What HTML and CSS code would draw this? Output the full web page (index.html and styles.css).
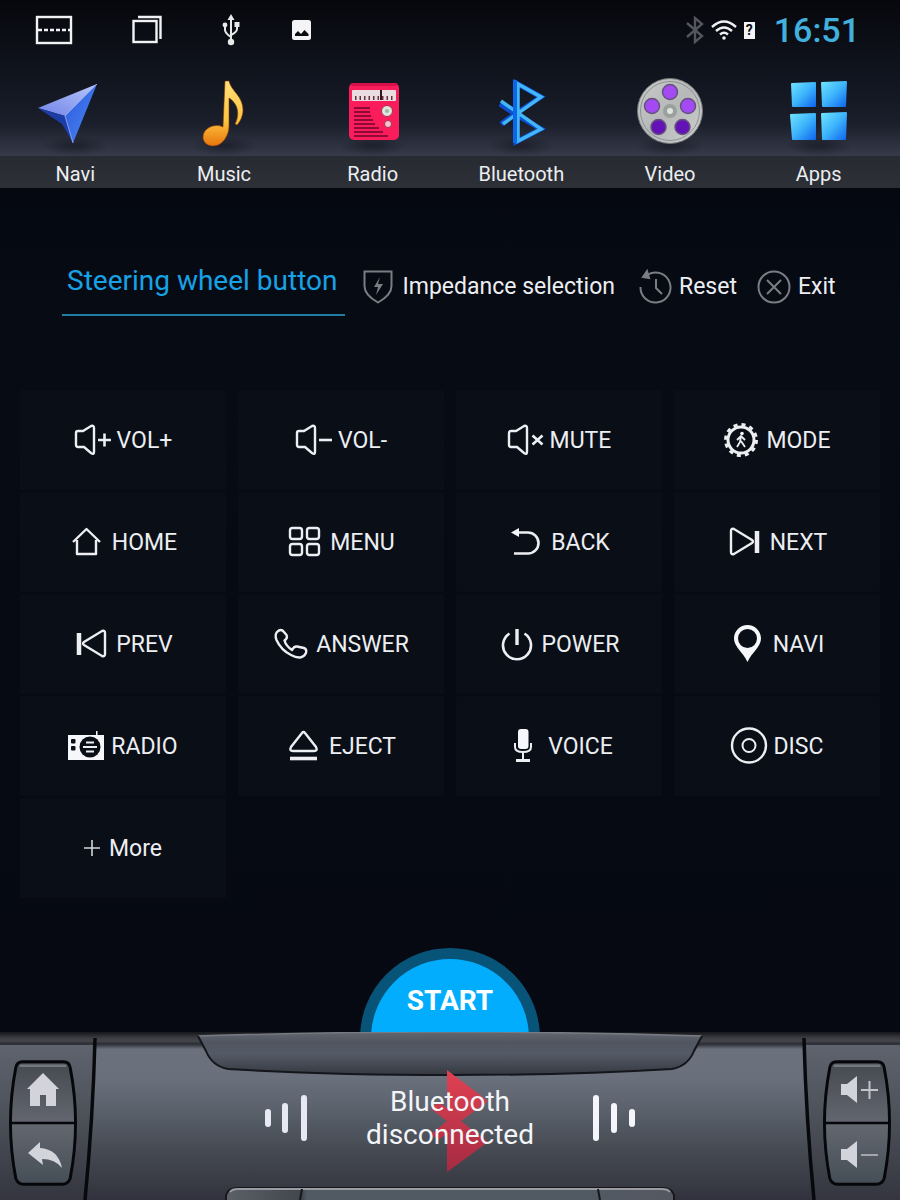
FILE: index.html
```html
<!DOCTYPE html>
<html lang="en">
<head>
<meta charset="utf-8">
<meta name="viewport" content="width=device-width, initial-scale=1">
<title>Steering wheel button</title>
<link rel="stylesheet" href="styles.css">
</head>
<body class="screen">
<header class="header">
  <div class="status">
    <div class="status-left">
      <svg width="36" height="30" viewBox="0 0 36 30" fill="none" stroke="#f2f2f4" stroke-width="2.400"><rect x="1" y="2" width="34" height="26"/><path d="M2 15h32" stroke-dasharray="4 2"/></svg>
      <svg width="30" height="30" viewBox="0 0 30 30" fill="none" stroke="#f2f2f4" stroke-width="2.400"><rect x="1.500" y="6" width="23" height="21"/><path d="M6 2h22.500v22" /></svg>
      <svg width="18" height="32" viewBox="0 0 18 32" fill="none" stroke="#e8e8ea" stroke-width="2"><path d="M9 5v22M3 12v4q0 3 6 7M15 11v4q0 3-6 6"/><g fill="#e8e8ea" stroke="none"><path d="M9 0l3.500 6h-7z"/><circle cx="9" cy="28" r="3.200"/><circle cx="3" cy="11" r="2.400"/><path d="M12.500 8h5v5h-5z"/></g></svg>
      <svg width="20" height="20" viewBox="0 0 20 20"><rect width="19" height="20" rx="2.500" fill="#f4f4f6"/><path d="M3 16v-2l3-3 3 3 3.500-4 4 4v2z" fill="#0a0c12"/></svg>
    </div>
    <div class="status-right">
      <svg width="18" height="28" viewBox="0 0 18 28" fill="none" stroke="#55565b" stroke-width="2.400"><path d="M1 7l15 13-7 6V2l7 6L1 21"/></svg>
      <svg width="26" height="20" viewBox="0 0 26 20" fill="none" stroke="#f0f0f2" stroke-width="2.400"><path d="M1 7q12-11 24 0M5 11q8-7 16 0M9 14.500q4-3.500 8 0"/><circle cx="13" cy="18" r="1.800" fill="#f0f0f2" stroke="none"/></svg>
      <span class="battery">?</span>
      <time class="clock">16:51</time>
    </div>
  </div>
  <nav class="nav">
    <a class="nav-item" href="#navi">
      <span class="nav-icon"><svg width="64" height="68" viewBox="0 0 64 68">
        <defs><linearGradient id="nv1" x1="0" x2="1" y1="1" y2="0"><stop stop-color="#6f83e8"/><stop offset="1" stop-color="#b9c6fa"/></linearGradient><linearGradient id="nv2" x1="0" x2="1" y1="0" y2="1"><stop stop-color="#2b56d8"/><stop offset="1" stop-color="#4c8bf8"/></linearGradient></defs>
        <path d="M54 7L-5 31l27 8z" fill="url(#nv1)"/><path d="M54 7L22 39l8 27z" fill="url(#nv2)"/><path d="M-5 31l27 8 8 27L19 47z" fill="#1c3ca6"/><path d="M54 7L22 39l8 27" fill="none" stroke="#88a5f6"/></svg></span>
      <span class="nav-label">Navi</span>
    </a>
    <a class="nav-item" href="#music">
      <span class="nav-icon"><svg width="64" height="68" viewBox="0 0 64 68">
        <defs><linearGradient id="mu" x1="0" x2="0" y1="0" y2="1"><stop stop-color="#ffe07a"/><stop offset=".6" stop-color="#fdc640"/><stop offset="1" stop-color="#e8750c"/></linearGradient></defs>
        <path d="M33 4h4c2 10 14 15 14 29 0 6-3 12-6 15l-2-1c4-7 5-19-6-26v28c0 9-6 20-16 20-6 0-10-4-10-9 0-9 12-14 20-10z" fill="url(#mu)" stroke="#8c3b08" stroke-width=".6"/></svg></span>
      <span class="nav-label">Music</span>
    </a>
    <a class="nav-item" href="#radio">
      <span class="nav-icon"><svg width="64" height="68" viewBox="0 0 64 68">
        <rect x="8" y="6" width="50" height="57" rx="5" fill="#fb1c5c"/><rect x="10" y="6" width="46" height="3" rx="1" fill="#d80f49"/><rect x="11" y="13" width="44" height="11" rx="1" fill="#eadde2"/><path d="M14 21h40" stroke="#6a3040" stroke-width="4" stroke-dasharray="1.500 3"/><path d="M40 13v10" stroke="#33131d" stroke-width="2"/>
        <path d="M13 31h16M13 35h16M13 39h17M13 43h19M13 47h21M13 51h25M13 55h29M13 59h34" stroke="#8e0b36" stroke-width="2"/><circle cx="46" cy="34" r="5.500" fill="#dfe5df" stroke="#a8314e"/><circle cx="46" cy="34" r="2" fill="#9cb9a2"/><circle cx="47" cy="47" r="3.500" fill="#f2c5cf" stroke="#a8314e"/></svg></span>
      <span class="nav-label">Radio</span>
    </a>
    <a class="nav-item" href="#bluetooth">
      <span class="nav-icon"><svg width="64" height="68" viewBox="0 0 64 68" fill="none" stroke-linejoin="miter">
        <path d="M11 27l15 10-14 10M27 6l25 14-26 17 26 15-25 13z" stroke="#0a4fd0" stroke-width="5"/><path d="M12 24l40 28-23 12V7l23 13-38 27" stroke="#43b6f8" stroke-width="3.500"/><path d="M26 3v63" stroke="#0c66ec" stroke-width="4"/></svg></span>
      <span class="nav-label">Bluetooth</span>
    </a>
    <a class="nav-item" href="#video">
      <span class="nav-icon"><svg width="68" height="68" viewBox="0 0 68 68">
        <defs><linearGradient id="rl" x1="0" x2="1" y1="0" y2="1"><stop stop-color="#c9cbc9"/><stop offset=".5" stop-color="#b6b8b9"/><stop offset="1" stop-color="#cfd1d0"/></linearGradient></defs>
        <circle cx="34" cy="34" r="32.500" fill="url(#rl)" stroke="#737777"/><circle cx="34" cy="34" r="29.500" fill="none" stroke="#8d9191"/>
        <g fill="#a44af2" stroke="#63527c" stroke-width="1.500"><circle cx="34" cy="15" r="7.500"/><circle cx="16" cy="29" r="7.500"/><circle cx="52" cy="29" r="7.500"/><g fill="#6511b8"><circle cx="22.500" cy="50" r="7.500"/><circle cx="46.500" cy="50" r="7.500"/></g></g><circle cx="34" cy="34" r="7" fill="#9aa09c"/><circle cx="34" cy="34" r="3" fill="#dfe4e0"/></svg></span>
      <span class="nav-label">Video</span>
    </a>
    <a class="nav-item" href="#apps">
      <span class="nav-icon"><svg width="64" height="68" viewBox="0 0 64 68">
        <defs><linearGradient id="ap" x1="0" x2="1" y1="0" y2="1"><stop stop-color="#6ce2ff"/><stop offset=".5" stop-color="#3db4fb"/><stop offset="1" stop-color="#1169ee"/></linearGradient></defs>
        <g fill="url(#ap)" stroke="url(#ap)" stroke-width="2" stroke-linejoin="round"><path d="M5 7l23-1v23H6z"/><path d="M35 6l24-1-1 24H36z"/><path d="M4 38l24-1v25H6z"/><path d="M35 37l24-1-1 26H36z"/></g></svg></span>
      <span class="nav-label">Apps</span>
    </a>
  </nav>
</header>

<main class="main">
  <div class="toolbar">
    <h1 class="tab">Steering wheel button</h1>
    <button class="tool" type="button"><svg width="30" height="34" viewBox="0 0 30 34" fill="none" stroke="#7c7d84" stroke-width="2"><path d="M1.500 1.500h27V16q0 9-13.500 16.500Q1.500 25 1.500 16z"/><path d="M17 7l-6 10h4l-2 8 7-11h-5z" fill="#7c7d84" stroke="none"/></svg>Impedance selection</button>
    <button class="tool tool-reset" type="button"><svg width="32" height="36" viewBox="0 0 32 36" fill="none" stroke="#7c7d84" stroke-width="2"><path d="M9 5.500A15 15 0 1 1 1.500 18M17 10v9l6 6"/><path d="M8 2l2 7-6-1z" fill="#7c7d84"/></svg>Reset</button>
    <button class="tool tool-exit" type="button"><svg width="34" height="34" viewBox="0 0 34 34" fill="none" stroke="#7c7d84" stroke-width="2"><circle cx="17" cy="17" r="15.500"/><path d="M10 10l14 14M24 10L10 24"/></svg>Exit</button>
  </div>

  <div class="keys">
    <button class="key" type="button"><svg class="ico" viewBox="0 0 36 36"><path d="M2 11q0-2 2-2h5l8-5q3-1 3 2v24q0 3-3 1l-7-6H4q-2 0-2-2z"/><path d="M24 18h13M30.500 11.500v13" stroke-width="2.600"/></svg>VOL+</button>
    <button class="key" type="button"><svg class="ico" viewBox="0 0 36 36"><path d="M2 11q0-2 2-2h5l8-5q3-1 3 2v24q0 3-3 1l-7-6H4q-2 0-2-2z"/><path d="M24 18h13" stroke-width="2.600"/></svg>VOL-</button>
    <button class="key" type="button"><svg class="ico" viewBox="0 0 36 36"><path d="M2 11q0-2 2-2h5l8-5q3-1 3 2v24q0 3-3 1l-7-6H4q-2 0-2-2z"/><path d="M25.500 13.500l10 9M35.500 13.500l-10 9" stroke-width="2.600"/></svg>MUTE</button>
    <button class="key" type="button"><svg class="ico" viewBox="0 0 36 36"><circle cx="18" cy="18" r="13" stroke-width="3"/><circle cx="18" cy="18" r="15.500" stroke-width="3" stroke-dasharray="4.060 4.060"/><circle cx="19" cy="11.500" r="1.800" class="solid"/><path d="M18 14l-1 6-3 5M18 19l4 6M14 18l4-4 4 4" stroke-width="1.800"/></svg>MODE</button>

    <button class="key" type="button"><svg class="ico" viewBox="0 0 36 36"><path d="M4 18L17.500 5 31 18M8 16v14h19V16" stroke-linejoin="round"/></svg>HOME</button>
    <button class="key" type="button"><svg class="ico" viewBox="0 0 36 36"><rect x="3" y="4" width="12" height="11" rx="2.500"/><rect x="20" y="4" width="12" height="11" rx="2.500"/><rect x="3" y="20" width="12" height="11" rx="2.500"/><rect x="20" y="20" width="12" height="11" rx="2.500"/></svg>MENU</button>
    <button class="key" type="button"><svg class="ico" viewBox="0 0 36 36"><path d="M8 8.500h12a10.500 10.500 0 0 1 0 21H6" stroke-width="2.600"/><path d="M3 8.500l8-4.500v9z" class="solid"/></svg>BACK</button>
    <button class="key" type="button"><svg class="ico" viewBox="0 0 36 36"><path d="M4 7q0-3 3-2l18 11q2 1.500 0 3L7 30q-3 1-3-2z"/><path d="M30 7v22" stroke-width="4.500"/></svg>NEXT</button>

    <button class="key" type="button"><svg class="ico" viewBox="0 0 36 36"><path d="M32 7q0-3-3-2L11 16q-2 1.500 0 3l18 11q3 1 3-2z"/><path d="M6 7v22" stroke-width="4.500"/></svg>PREV</button>
    <button class="key" type="button"><svg class="ico" viewBox="0 0 36 36"><path d="M4 6q4-4 7 0l2.500 3q1.500 3-2 5.500Q13 20 19 24q2-4 5-3.500l7 1.500q3 1 2 5-4 8-15 2Q8 24 3.500 14 1.500 9 4 6z" stroke-linejoin="round"/></svg>ANSWER</button>
    <button class="key" type="button"><svg class="ico" viewBox="0 0 36 36"><path d="M10.500 7.500a14 14 0 1 0 15 0" stroke-width="2.600"/><path d="M18 3v16" stroke-width="3.400"/></svg>POWER</button>
    <button class="key" type="button"><svg class="ico" viewBox="0 0 36 36"><path fill-rule="evenodd" class="solid" d="M17.500-1C25-1 31 5 31 12.500 31 21 22 26 17.500 36 13 26 4 21 4 12.500 4 5 10-1 17.500-1zm0 4a9.500 9.500 0 1 0 0 19 9.500 9.500 0 0 0 0-19z"/></svg>NAVI</button>

    <button class="key" type="button"><svg class="ico" viewBox="0 0 36 36"><path class="solid" d="M0 7h28V3h1.500v4H36v25H0z"/><g class="cut"><circle cx="22" cy="19" r="10.500"/><rect x="3" y="11" width="4.500" height="4.500" rx="1"/><rect x="3" y="18" width="4.500" height="4.500" rx="1"/></g><path d="M18 14.500h8M15 19h14M18 23.500h8" stroke-width="1.800"/></svg>RADIO</button>
    <button class="key" type="button"><svg class="ico" viewBox="0 0 36 36"><path d="M16 5q1.500-2 3 0l11 14q2 4-2 4H7q-4 0-2-4z"/><path d="M4 30.500h27" stroke-width="3.600"/></svg>EJECT</button>
    <button class="key" type="button"><svg class="ico" viewBox="0 0 36 36"><rect class="solid" x="13" y="1" width="10.500" height="20" rx="3"/><path d="M10 15v4q0 5 8 5t8-5v-4M18 24v8" stroke-width="2"/><path d="M11 32.500h14" stroke-width="3"/></svg>VOICE</button>
    <button class="key" type="button"><svg class="ico" viewBox="0 0 36 36"><circle cx="18" cy="17.500" r="17"/><circle cx="18" cy="17.500" r="6.500" stroke-width="2"/></svg>DISC</button>

    <button class="key" type="button"><svg class="ico-plus" width="16" height="16" viewBox="0 0 16 16" fill="none" stroke="#d5d6da" stroke-width="1.600"><path d="M0 8h16M8 0v16"/></svg>More</button>
  </div>

  <div class="start-slot"><button class="start" type="button">START</button></div>
</main>

<footer class="dock">
  <svg class="dock-art" viewBox="0 0 900 168" preserveAspectRatio="none">
    <defs>
      <linearGradient id="lip" x1="0" x2="0" y1="0" y2="1"><stop stop-color="#62666f"/><stop offset=".25" stop-color="#50555f"/><stop offset=".5" stop-color="#555b66"/><stop offset="1" stop-color="#343841"/></linearGradient>
      <linearGradient id="tray" x1="0" x2="1" y1="0" y2="0"><stop stop-color="#5c6068"/><stop offset=".17" stop-color="#41464d"/><stop offset=".18" stop-color="#515963"/><stop offset=".82" stop-color="#515963"/><stop offset="1" stop-color="#555861"/></linearGradient>
      <linearGradient id="side" x1="0" x2="0" y1="0" y2="1"><stop stop-color="#5e636d"/><stop offset=".5" stop-color="#4b4f58"/><stop offset="1" stop-color="#34353f"/></linearGradient>
    </defs>
    <path d="M0 13h93q-2 80-9 155H0zM900 13h-94q2 80 8 155h86z" fill="url(#side)"/>
    <path d="M95 6q-2 80-10 162M804 6q2 80 10 162" fill="none" stroke="#08090d" stroke-width="3.500"/>
    <path d="M198 4Q320 0 450 0t252 4l-8 15q-6 15-22 18-100 6-222 6t-222-6q-16-3-22-17z" fill="url(#lip)"/>
    <path d="M198 4Q320 0 450 0t252 4" fill="none" stroke="#777b84" stroke-width="1.500"/>
    <path d="M198 4l8 15q6 15 22 18 100 6 222 6t222-6q16-3 22-18l8-15" fill="none" stroke="#14161c" stroke-width="2"/>
    <path d="M226 172v-9q2-7 12-7h424q10 0 12 7v9z" fill="url(#tray)" stroke="#15171c" stroke-width="2"/>
    <path d="M230 160q2-3 8-3h424q6 0 8 3" fill="none" stroke="#9a9ca1" stroke-width="2"/>
    <path d="M302 157l-2 11M598 157l2 11" stroke="#15171c" stroke-width="2"/>
  </svg>
  <div class="pad">
    <svg class="pad-art" viewBox="0 0 70 130"><defs><linearGradient id="pd" x1="0" x2="0" y1="0" y2="1"><stop stop-color="#454950"/><stop offset=".48" stop-color="#62656f"/><stop offset=".52" stop-color="#62666f"/><stop offset="1" stop-color="#454e56"/></linearGradient></defs><path d="M14 2h42q6 0 7 6 11 57 0 114-2 6-8 6H15q-6 0-8-6Q-4 65 7 8q1-6 7-6z" fill="url(#pd)" stroke="#06070b" stroke-width="3"/><path d="M11 6h48" stroke="#74777e" stroke-width="2.500"/><path d="M1 65h68" stroke="#06070b" stroke-width="2.500"/></svg>
    <button class="pad-key" type="button" aria-label="Home"><svg width="32" height="34" viewBox="0 0 32 34"><path d="M16 0l16 16h-3v17H19V22h-6v11H3V16H0z" fill="#d3d3dc"/></svg></button>
    <button class="pad-key" type="button" aria-label="Back"><svg width="34" height="28" viewBox="0 0 34 28"><path d="M2 12L14 1v6q18 1 22 20-7-9-20-9l1 6z" fill="#d3d3dc"/></svg></button>
  </div>
  <div class="now">
    <svg width="42" height="46" viewBox="0 0 42 46" stroke="#e6e9f2" stroke-width="6" stroke-linecap="round"><path d="M3 17v12M20 11v24M39 3v40"/></svg>
    <p class="now-text"><svg class="now-bt" width="72" height="104" viewBox="0 0 72 104"><defs><linearGradient id="rd" x1="0" x2="0" y1="0" y2="1"><stop stop-color="#e04252"/><stop offset="1" stop-color="#a52b42"/></linearGradient></defs><path d="M31 0l41 31-27 20 27 21-41 30V64l-9 6-7-6 16-13-16-12 7-7 9 6z" fill="url(#rd)"/></svg><span class="now-label">Bluetooth<br>disconnected</span></p>
    <svg width="42" height="46" viewBox="0 0 42 46" stroke="#f4f6fb" stroke-width="6" stroke-linecap="round"><path d="M3 3v40M21 11v24M39 17v12"/></svg>
  </div>
  <div class="pad pad-volume">
    <svg class="pad-art" viewBox="0 0 70 130"><path d="M14 2h42q6 0 7 6 11 57 0 114-2 6-8 6H15q-6 0-8-6Q-4 65 7 8q1-6 7-6z" fill="url(#pd)" stroke="#06070b" stroke-width="3"/><path d="M11 6h48" stroke="#74777e" stroke-width="2.500"/><path d="M1 65h68" stroke="#06070b" stroke-width="2.500"/></svg>
    <button class="pad-key" type="button" aria-label="Volume up"><svg width="38" height="28" viewBox="0 0 38 28"><path d="M0 8h6l10-8v27L6 19H0z" fill="#d3d3dc"/><path d="M20 14h17M28.500 5v18" stroke="#c3c4cc" stroke-width="2"/></svg></button>
    <button class="pad-key" type="button" aria-label="Volume down"><svg width="38" height="28" viewBox="0 0 38 28"><path d="M0 8h6l10-8v27L6 19H0z" fill="#d3d3dc"/><path d="M20 14h17" stroke="#a3a5ad" stroke-width="2"/></svg></button>
  </div>
</footer>
</body>
</html>
```

FILE: styles.css
```css
* { box-sizing: border-box; }
body.screen {
  margin: 0;
  min-height: 100vh;
  display: flex;
  flex-direction: column;
  background: #060a13;
  color: #eceef2;
  font-family: Roboto, "Liberation Sans", sans-serif;
}
button {
  font: inherit;
  color: inherit;
  background: none;
  border: 0;
  padding: 0;
  cursor: pointer;
}
svg { display: block; flex: none; overflow: visible; }

/* header */
.header {
  background: linear-gradient(#06070c 0, #0d1018 50px, #151924 100px, #1b1f2b 124px, #2d303e 144px, #373a49 156px, #272a31 156px, #2d3037 188px);
}
.status {
  height: 60px;
  padding: 0 40px 0 36px;
  display: flex;
  align-items: center;
  justify-content: space-between;
}
.status-left { display: flex; align-items: center; gap: 60px; }
.status-left svg:nth-child(4) { margin-left: -8px; }
.status-right { display: flex; align-items: center; gap: 7px; }
.battery {
  width: 11px;
  height: 17px;
  background: #f4f4f6;
  color: #0a0c12;
  font-size: 14px;
  font-weight: 700;
  line-height: 17px;
  text-align: center;
}
.clock {
  margin-left: 12px;
  font-size: 34px;
  font-weight: 500;
  line-height: 40px;
  color: #41b0dd;
}
.nav { display: grid; grid-template-columns: repeat(6, 1fr); padding: 0 7px 0 1px; }
.nav-item { color: #eceef2; text-decoration: none; display: flex; flex-direction: column; align-items: center; }
.nav-icon {
  height: 96px;
  padding-top: 17px;
  background: radial-gradient(ellipse 34px 10px at 50% 86px, rgba(12, 14, 24, .5), rgba(12, 14, 24, 0));
}
.nav-label { font-size: 20px; line-height: 32px; padding-top: 2px; height: 32px; }

/* main */
.main {
  flex: 1;
  display: flex;
  flex-direction: column;
  background: linear-gradient(#050811, #070b14 120px, #060911);
}
.toolbar {
  display: flex;
  align-items: center;
  padding: 70px 62px 0;
}
.tab {
  margin: 0 18px 0 0;
  padding: 0 8px 0 5px;
  height: 58px;
  border-bottom: 2px solid #227ba0;
  color: #18a2e6;
  font-size: 28px;
  font-weight: 400;
  line-height: 46px;
  white-space: nowrap;
}
.tool { display: flex; align-items: center; gap: 9px; font-size: 23px; line-height: 32px; white-space: nowrap; }
.tool-reset { margin-left: 24px; gap: 8px; }
.tool-exit { margin-left: 20px; gap: 7px; }
.keys {
  display: grid;
  grid-template-columns: repeat(4, 1fr);
  grid-auto-rows: 100px;
  gap: 2px 12px;
  padding: 74px 20px 0;
}
.key {
  display: flex;
  align-items: center;
  justify-content: center;
  gap: 7px;
  background: #0a0e17;
  border: 1px solid #0b0c17;
  font-size: 23px;
}
.ico { width: 36px; height: 36px; fill: none; stroke: #eceef2; stroke-width: 2.4px; }
.ico .solid { fill: #f6f7fa; stroke: none; }
.ico .cut { fill: #0a0e17; stroke: none; }
.ico-plus { margin-right: 2px; }
.start-slot {
  margin-top: auto;
  padding-top: 40px;
  height: 124px;
  overflow: hidden;
  display: flex;
  justify-content: center;
  align-items: flex-start;
}
.start {
  flex: none;
  width: 180px;
  height: 180px;
  padding: 0 0 76px;
  border: 11px solid #085478;
  border-radius: 50%;
  background: #02adfe;
  color: #fff;
  font-size: 28px;
  font-weight: 700;
}

/* dock */
.dock {
  position: relative;
  min-height: 168px;
  padding: 13px 9px 0;
  display: flex;
  align-items: center;
  justify-content: space-between;
  overflow: hidden;
  background: linear-gradient(#15161a 0, #3c3d42 6px, #44464c 9px, #2a2c33 12px, #6a707c 17px, #6a717d 45px, #59606a 80px, #454951 120px, #31323d 168px);
}
.dock-art { position: absolute; inset: 0; width: 100%; height: 100%; }
.pad { position: relative; width: 68px; height: 130px; display: grid; grid-template-rows: 1fr 1fr; }
.pad-volume { padding-left: 5px; }
.pad-art { position: absolute; inset: 0; width: 100%; height: 100%; }
.pad-key { position: relative; display: flex; align-items: center; justify-content: center; }
.now { position: relative; display: flex; align-items: center; gap: 59px; padding-bottom: 10px; }
.now-text { position: relative; margin: 0; text-align: center; font-size: 28px; line-height: 33px; color: #f4f5f8; }
.now-bt { position: absolute; left: 50px; top: -15px; }
.now-label { position: relative; }
```
